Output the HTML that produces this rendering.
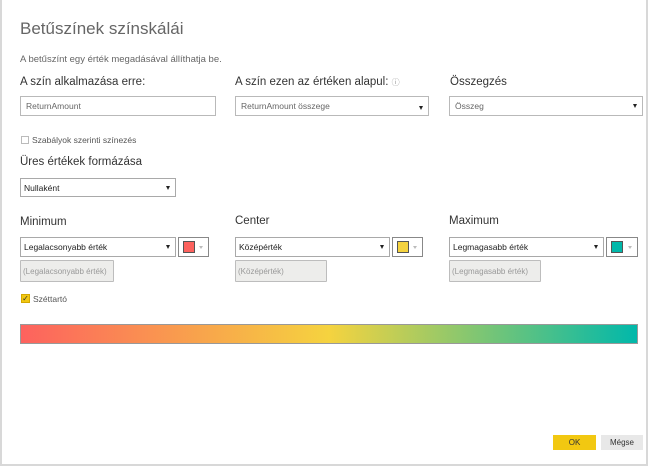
<!DOCTYPE html>
<html><head><meta charset="utf-8"><style>
*{margin:0;padding:0;box-sizing:border-box}
body{width:650px;height:468px;background:#fff;font-family:"Liberation Sans",sans-serif;position:relative;overflow:hidden;color:#333}
.frame{position:absolute;left:0;top:0;width:648px;height:466px;border-left:2px solid #d8d8d8;border-right:2px solid #d8d8d8;border-bottom:2px solid #d8d8d8}
.a{position:absolute;white-space:nowrap}
.lbl{font-size:11.5px;color:#333}
.box{position:absolute;border:1px solid #b9b9b9;background:#fff;font-size:8.5px;color:#666;padding-left:5px;display:flex;align-items:center;white-space:nowrap}
.sel{position:absolute;border:1px solid #a9a9a9;background:#fff;font-size:8.5px;color:#222;padding-left:3px;display:flex;align-items:center;white-space:nowrap}
.arr{position:absolute;right:5px;top:7px;width:0;height:0;border-left:2.5px solid transparent;border-right:2.5px solid transparent;border-top:4px solid #222}
.col{position:absolute;border:1px solid #888;background:#fff}
.col i{position:absolute;left:4px;top:3px;width:12px;height:12px;border:1px solid #555}
.col b{position:absolute;right:5px;top:8px;border-left:2px solid transparent;border-right:2px solid transparent;border-top:3px solid #bbb}
.dis{position:absolute;border:1px solid #bdbdbd;background:#ededeb;font-size:8px;color:#999;padding-left:2px;display:flex;align-items:center;border-radius:1px;white-space:nowrap;overflow:hidden}
</style></head><body>
<div class="frame"></div>
<div class="a" style="left:20px;top:19px;font-size:17px;color:#666">Betűszínek színskálái</div>
<div class="a" style="left:20px;top:54px;font-size:9.5px;color:#666">A betűszínt egy érték megadásával állíthatja be.</div>
<div class="a lbl" style="left:20px;top:76px">A szín alkalmazása erre:</div>
<div class="a lbl" style="left:235px;top:76px">A szín ezen az értéken alapul: <span style="font-size:8px;color:#999">ⓘ</span></div>
<div class="a lbl" style="left:450px;top:76px">Összegzés</div>
<div class="box" style="left:20px;top:96px;width:196px;height:20px">ReturnAmount</div>
<div class="box" style="left:235px;top:96px;width:194px;height:20px">ReturnAmount összege<span class="arr" style="top:9px"></span></div>
<div class="box" style="left:449px;top:96px;width:194px;height:20px">Összeg<span class="arr"></span></div>
<div class="a" style="left:21px;top:136px;width:8px;height:8px;border:1px solid #bbb"></div>
<div class="a" style="left:32px;top:135px;font-size:8.5px;color:#555">Szabályok szerinti színezés</div>
<div class="a lbl" style="left:20px;top:156px">Üres értékek formázása</div>
<div class="sel" style="left:20px;top:178px;width:156px;height:19px">Nullaként<span class="arr"></span></div>
<div class="a lbl" style="left:20px;top:216px">Minimum</div>
<div class="a lbl" style="left:235px;top:215px">Center</div>
<div class="a lbl" style="left:449px;top:215px">Maximum</div>
<div class="sel" style="left:20px;top:237px;width:156px;height:20px">Legalacsonyabb érték<span class="arr"></span></div>
<div class="col" style="left:178px;top:237px;width:31px;height:20px"><i style="background:#fd625e"></i><b></b></div>
<div class="sel" style="left:235px;top:237px;width:155px;height:20px">Középérték<span class="arr"></span></div>
<div class="col" style="left:392px;top:237px;width:31px;height:20px"><i style="background:#f5d33f"></i><b></b></div>
<div class="sel" style="left:449px;top:237px;width:155px;height:20px">Legmagasabb érték<span class="arr"></span></div>
<div class="col" style="left:606px;top:237px;width:32px;height:20px"><i style="background:#01b8aa"></i><b></b></div>
<div class="dis" style="left:20px;top:260px;width:94px;height:22px">(Legalacsonyabb érték)</div>
<div class="dis" style="left:235px;top:260px;width:92px;height:22px">(Középérték)</div>
<div class="dis" style="left:449px;top:260px;width:92px;height:22px">(Legmagasabb érték)</div>
<div class="a" style="left:21px;top:294px;width:9px;height:9px;background:#f2c811;border:1px solid #d4a800;font-size:8px;line-height:7px;color:#333;text-align:center">✓</div>
<div class="a" style="left:33px;top:294px;font-size:8.5px;color:#555">Széttartó</div>
<div class="a" style="left:20px;top:324px;width:618px;height:20px;border:1px solid #999;background:linear-gradient(to right,#fd625e,#f5d33f 50%,#01b8aa)"></div>
<div class="a" style="left:553px;top:435px;width:43px;height:15px;background:#f2c811;font-size:8px;color:#333;text-align:center;line-height:15px">OK</div>
<div class="a" style="left:601px;top:435px;width:42px;height:15px;background:#e8e8e8;font-size:8px;color:#333;text-align:center;line-height:15px">Mégse</div>
</body></html>
